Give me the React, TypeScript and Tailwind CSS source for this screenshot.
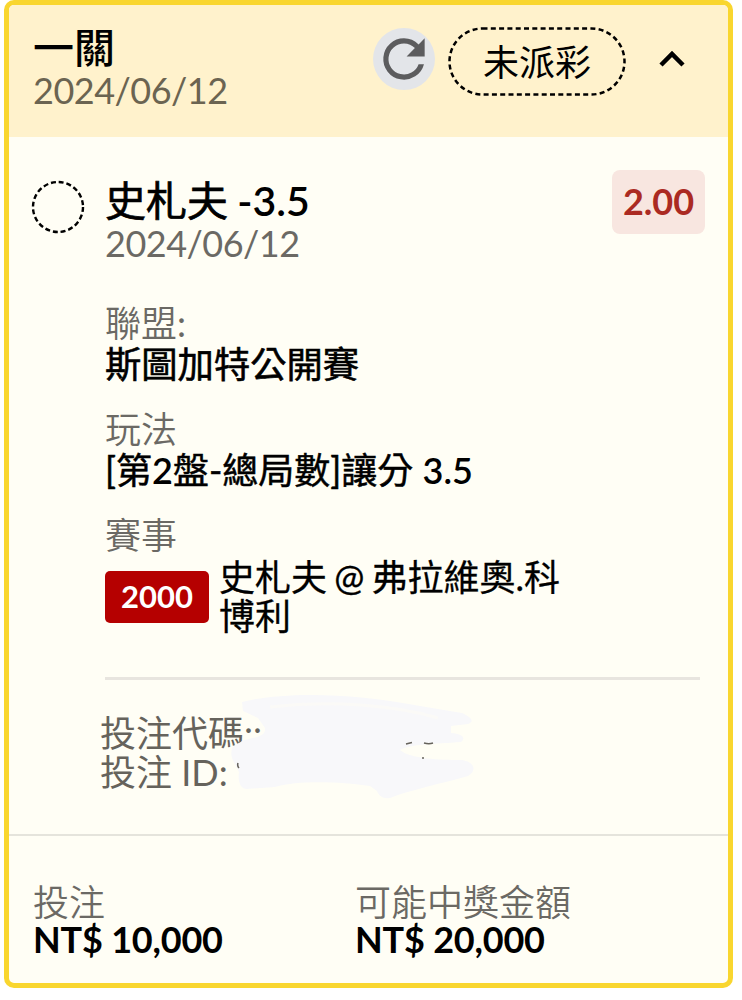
import { useState } from 'react';
import type { ReactNode } from 'react';
import clsx from 'clsx';

interface FieldProps {
  label: ReactNode;
  children: ReactNode;
  className?: string;
}

function Field({ label, children, className }: FieldProps) {
  return (
    <div className={className}>
      <div className="font-[350] text-[#6b6964]">{label}</div>
      {children}
    </div>
  );
}

function RefreshIcon() {
  return (
    <svg viewBox="0 0 24 24" className="size-[62px]" fill="#5c5c5e">
      <circle cx="12" cy="12" r="12" fill="#e3e5e9" />
      <path d="M17.65 6.35A7.96 7.96 0 0 0 12 4a8 8 0 1 0 7.73 10h-2.08A6 6 0 1 1 12 6c1.66 0 3.14.69 4.22 1.78L13 11h7V4z" />
    </svg>
  );
}

// Brush strokes that hide the slip code
function Scribble() {
  return (
    <svg className="absolute left-[130px] top-[-22px]" width="250" height="120" viewBox="0 0 250 120" fill="none">
      <path
        d="M12 10C50 0 120 0 190 14L232 21C243 26 244 30 238 32L221 34V41C233 42 236 46 231 50C205 52 180 52 170 58C180 67 210 68 232 68C245 70 247 79 238 84C210 92 180 98 160 106C153 107 149 104 147 99L140 94C110 90 70 88 45 95L16 97C9 96 8 87 9 80L5 72C1 66 0 60 3 55L12 49L22 46C30 45 36 42 35 36L28 26L13 19Z"
        fill="#f8f8fa"
      />
      <path d="M40 15C100 8 165 13 208 26" stroke="#fbfaf7" strokeWidth="3" />
      <path d="M176 52l6-1.5M194 51q5 1.5 9 0M192 66h2M8 71q-1 3 1 5" stroke="#66635c" strokeWidth="1.5" />
    </svg>
  );
}

export default function App() {
  const [open, setOpen] = useState(true);

  return (
    <div className="h-[1000px] bg-white pl-[4px] pr-[9px] font-['Lato','Noto_Sans_CJK_TC',sans-serif] text-[36px] leading-[39px] text-black">
      <div className={clsx('overflow-hidden rounded-[10px] border-[5px] border-[#f9d62f] bg-[#fffef5]', open && 'h-[988px]')}>
        {/* Header */}
        <div className="flex h-[132px] items-start bg-[#fff2cc] pl-[24px] pr-[43px]">
          <div className="flex-1 pt-[21px]">
            <div className="text-[41px] font-medium leading-[43px]">一關</div>
            <div className="mt-[2px] tracking-[-0.5px] text-[#6b6451]">2024/06/12</div>
          </div>
          <button className="mt-[23px]">
            <RefreshIcon />
          </button>
          <div className="relative ml-[13px] mt-[22px] flex h-[69px] w-[178px] items-center justify-center">
            <svg className="absolute inset-0" width="178" height="69" fill="none">
              <rect x="1.5" y="1.5" width="175" height="66" rx="33" stroke="#000" strokeWidth="2.5" strokeDasharray="5 3.3" />
            </svg>
            <span className="pt-[2px]">未派彩</span>
          </div>
          <button className="ml-[33px] mt-[42px]" onClick={() => setOpen(!open)}>
            <svg className={clsx(!open && 'rotate-180')} width="26" height="20" fill="none" stroke="#000" strokeWidth="4.5">
              <path d="M2 18 13 7l11 11" />
            </svg>
          </button>
        </div>

        {open && (
          <>
            {/* Selection */}
            <div className="flex h-[697px] pl-[22px] pr-[28px]">
              <svg className="mt-[43px] shrink-0" width="54" height="54" fill="none">
                <circle cx="27" cy="27" r="25" stroke="#000" strokeWidth="2.4" strokeDasharray="5 2.85" />
              </svg>
              <div className="ml-[20px] flex-1">
                <div className="flex items-start justify-between pt-[33px]">
                  <div className="pt-[9px]">
                    <div className="text-[41px] font-semibold leading-[43px] [word-spacing:-1px]">
                      <span className="font-normal [-webkit-text-stroke:0.7px_#000]">史札夫</span> -3.5
                    </div>
                    <div className="mt-[2px] tracking-[-0.5px] text-[#6b6964]">2024/06/12</div>
                  </div>
                  <div className="mr-[-5px] flex h-[64px] w-[93px] items-center justify-center rounded-[8px] bg-[#f8e6e0] pb-[2px] font-bold text-[#ab2a22]">
                    2.00
                  </div>
                </div>

                <Field label={<>聯盟<span className="font-normal">:</span></>} className="mt-[41px]">
                  <div className="text-[36.3px] leading-[43px] [-webkit-text-stroke:0.6px_#000]">斯圖加特公開賽</div>
                </Field>
                <Field label="玩法" className="mt-[24px]">
                  <div className="leading-[43px] [-webkit-text-stroke:0.5px_#000]">
                    [第<b className="font-semibold [-webkit-text-stroke:0]">2</b>盤-總局數]讓分{' '}
                    <b className="font-semibold [-webkit-text-stroke:0]">3.5</b>
                  </div>
                </Field>
                <Field label="賽事" className="mt-[24px]">
                  <div className="mt-[3px] flex items-center">
                    <div className="flex h-[52px] w-[104px] items-center justify-center rounded-[5px] bg-[#b50000] pb-px text-[31px] font-bold text-white">
                      2000
                    </div>
                    <div className="ml-[10px] w-[350px] [word-spacing:-2px] [-webkit-text-stroke:0.3px_#000]">
                      史札夫 @ 弗拉維奧.科博利
                    </div>
                  </div>
                </Field>

                <div className="mt-[41px] h-[3px] bg-[#e8e5df]" />

                <div className="relative -ml-[5px] mt-[34px] text-[#66635c]">
                  <div>投注代碼::</div>
                  <div>投注 ID:</div>
                  <Scribble />
                </div>
              </div>
            </div>

            {/* Stake and payout */}
            <div className="grid grid-cols-[322px_1fr] border-t-2 border-[#e5e4dc] pl-[24px] pt-[47px]">
              <Field label="投注">
                <div className="mt-[-2px] tracking-[-0.2px] font-bold">NT$ 10,000</div>
              </Field>
              <Field label="可能中獎金額">
                <div className="mt-[-2px] tracking-[-0.2px] font-bold">NT$ 20,000</div>
              </Field>
            </div>
          </>
        )}
      </div>
    </div>
  );
}
